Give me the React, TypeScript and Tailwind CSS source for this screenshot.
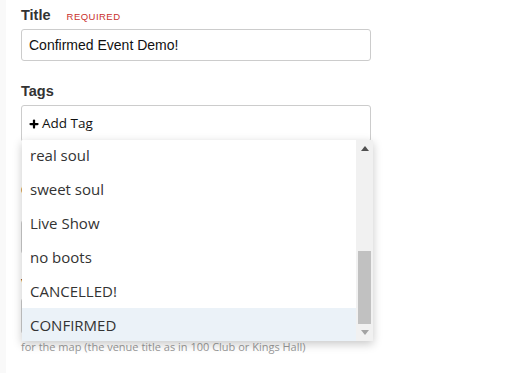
import { Plus } from "lucide-react";

const tags = ["real soul", "sweet soul", "Live Show", "no boots", "CANCELLED!", "CONFIRMED"];

function Label({ children, required }: { children: string; required?: boolean }) {
  return (
    <div className="flex items-baseline gap-[16px] h-[20px]">
      <span className="text-[14.5px] font-bold text-[#333]">{children}</span>
      {required ? (
        <span className="text-[9.5px] tracking-[0.05em] text-[#c9302c]">REQUIRED</span>
      ) : null}
    </div>
  );
}

function TagDropdown() {
  return (
    <div className="absolute left-[22px] top-[140px] w-[351px] h-[201px] bg-white shadow-[0_3px_9px_rgba(0,0,0,0.22)] overflow-hidden flex">
      <ul className="flex-1 -mt-[2px] text-[15px] text-[#333] font-['Open_Sans',sans-serif]">
        {tags.map((tag, i) => (
          <li
            key={tag}
            className={
              "h-[34px] flex items-center pl-[8px] " +
              (i === tags.length - 1 ? "bg-[#ebf2f8]" : "")
            }
          >
            {tag}
          </li>
        ))}
      </ul>
      {/* scrollbar */}
      <div className="w-[17px] h-full bg-[#f1f1f1] flex flex-col items-center">
        <div className="h-[17px] w-full flex items-center justify-center">
          <svg width="8" height="5" viewBox="0 0 8 5">
            <path d="M0 5 L4 0 L8 5 Z" fill="#505050" />
          </svg>
        </div>
        <div className="flex-1 w-full flex flex-col justify-end px-[2px]">
          <div className="h-[73px] w-full bg-[#c1c1c1]" />
        </div>
        <div className="h-[17px] w-full flex items-center justify-center">
          <svg width="8" height="5" viewBox="0 0 8 5">
            <path d="M0 0 L8 0 L4 5 Z" fill="#a3a3a3" />
          </svg>
        </div>
      </div>
    </div>
  );
}

export default function App() {
  return (
    <div className="relative w-[523px] h-[373px] bg-white flex font-['Liberation_Sans',Arial,sans-serif] overflow-hidden">
      <div className="w-[6px] h-full bg-[#f9f9f9]" />
      <div className="w-[350px] ml-[15px] pt-[5px] flex flex-col">
        <Label required>Title</Label>
        <div className="mt-[4px] h-[32px] border border-[#ccc] rounded-[3px] flex items-center px-[7px] text-[14px] text-[#111]">
          Confirmed Event Demo!
        </div>

        <div className="mt-[20px]">
          <Label>Tags</Label>
        </div>
        <div className="mt-[4px] h-[37px] border border-[#ccc] rounded-[3px] flex items-center gap-[2px] px-[6px] text-[13.5px] text-[#111] font-['Open_Sans',sans-serif]">
          <Plus size={12} strokeWidth={4.5} className="text-black" />
          Add Tag
        </div>

        <div className="mt-[38px]">
          <Label>Category</Label>
        </div>
        <div className="mt-[20px] h-[34px] border border-[#ccc] rounded-[3px]" />

        <div className="mt-[20px]">
          <Label>Venue</Label>
        </div>
        <div className="mt-[4px] h-[36px] border border-[#ccc] rounded-[3px]" />
        <p className="mt-[5px] text-[11px] text-[#999] font-['Open_Sans',sans-serif]">
          for the map (the venue title as in 100 Club or Kings Hall)
        </p>
      </div>
      <TagDropdown />
    </div>
  );
}
